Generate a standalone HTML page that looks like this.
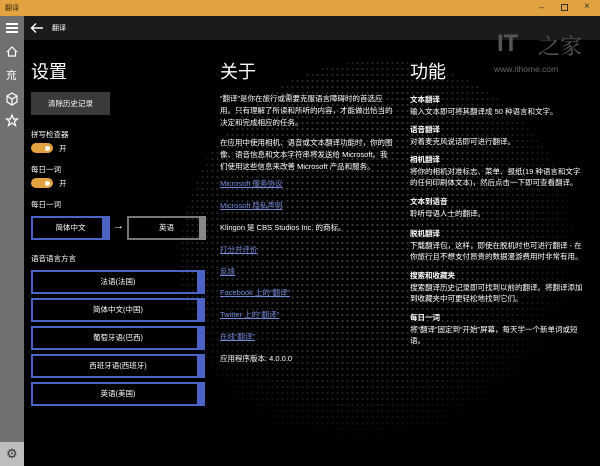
<!DOCTYPE html>
<html><head><meta charset="utf-8"><style>
*{margin:0;padding:0;box-sizing:border-box}
body{width:600px;height:466px;overflow:hidden;background:#000;font-family:"Liberation Sans","Noto Sans CJK SC",sans-serif;color:#fff;position:relative;font-size:7.5px}
.a{position:absolute;white-space:nowrap}
.title{left:0;top:0;width:600px;height:16px;background:#e1a23f}
.hdr{left:24px;top:16px;width:576px;height:24px;background:#1b1b1b}
.side{left:0;top:16px;width:24px;height:450px;background:#707070}
.globe{left:180px;top:60px;width:400px;height:400px;border-radius:50%;
background-image:radial-gradient(circle,#444 0.9px,transparent 1.2px);background-size:5px 6px;
-webkit-mask-image:radial-gradient(circle at 45% 40%,#000 30%,rgba(0,0,0,.5) 55%,transparent 70%);opacity:.9}
h1{position:absolute;font-weight:normal;font-size:18px}
.lnk{color:#7388d8;text-decoration:underline}
.dd{position:absolute;left:31px;width:174px;height:24px;border:2px solid #4b63c4;text-align:center;line-height:20px}
.dd:after{content:"";position:absolute;right:-2px;top:-2px;width:8px;height:24px;background:#4b63c4}
.tog{position:absolute;left:31px;width:22px;height:10px;border-radius:5px;background:#e1a23f}
.tog:after{content:"";position:absolute;right:3px;top:2.5px;width:5px;height:5px;border-radius:50%;background:#fff}
.b{font-weight:bold}
</style></head><body>
<div class="a globe"></div>
<div class="a title"></div>
<div class="a" style="left:5px;top:3px;font-size:7px;color:#3a2a10">翻译</div>
<div class="a" style="left:539px;top:2px;font-size:9px;color:#333">–</div>
<div class="a" style="left:561px;top:4px;width:7px;height:7px;border:1px solid #333"></div>
<div class="a" style="left:584px;top:1px;font-size:10px;color:#333">×</div>
<div class="a hdr"></div>
<div class="a side"></div>
<div class="a" style="left:6px;top:23px;width:12px;height:1.5px;background:#fff;box-shadow:0 4px #fff,0 8px #fff"></div>
<svg class="a" style="left:5px;top:44px" width="14" height="90" fill="none" stroke="#fff" stroke-width="1.2"><path d="M2 8L7 3L12 8M3.5 7V12H10.5V7"/><text x="1" y="35" fill="#fff" stroke="none" font-size="11" font-family="Noto Sans CJK SC">㐬</text><path d="M7 49L12 52V58L7 61L2 58V52Z M2 52L7 55L12 52M7 55V61"/><path d="M7 71L8.6 75H12.5L9.4 77.5L10.5 81.5L7 79L3.5 81.5L4.6 77.5L1.5 75H5.4Z"/></svg>
<div class="a" style="left:0;top:442px;width:24px;height:24px;background:#bdbdbd"></div>
<div class="a" style="left:6px;top:446px;font-size:13px;color:#333">⚙</div>
<svg class="a" style="left:30px;top:22px" width="14" height="12" fill="none" stroke="#fff" stroke-width="1.4"><path d="M13 6H2M6 1.5L1.5 6L6 10.5"/></svg>
<div class="a" style="left:52px;top:23px;font-size:7px">翻译</div>

<h1 style="left:31px;top:58px">设置</h1>
<div class="a" style="left:31px;top:92px;width:79px;height:23px;background:#3a3a3a;text-align:center;line-height:23px">清除历史记录</div>
<div class="a" style="left:31px;top:129px">拼写检查器</div>
<div class="tog" style="top:143px"></div><div class="a" style="left:59px;top:143px">开</div>
<div class="a" style="left:31px;top:164px">每日一词</div>
<div class="tog" style="top:178px"></div><div class="a" style="left:59px;top:178px">开</div>
<div class="a" style="left:31px;top:199px">每日一词</div>
<div class="a" style="left:31px;top:216px;width:79px;height:24px;border:2px solid #4b63c4;text-align:center;line-height:20px">简体中文</div>
<div class="a" style="left:102px;top:216px;width:8px;height:24px;background:#4b63c4"></div>
<div class="a" style="left:113px;top:220px;font-size:11px">→</div>
<div class="a" style="left:127px;top:216px;width:79px;height:24px;border:2px solid #777;text-align:center;line-height:20px">英语</div>
<div class="a" style="left:199px;top:216px;width:7px;height:24px;background:#888"></div>
<div class="a" style="left:31px;top:253px">语音语言方言</div>
<div class="dd" style="top:270px">法语(法国)</div>
<div class="dd" style="top:298px">简体中文(中国)</div>
<div class="dd" style="top:326px">葡萄牙语(巴西)</div>
<div class="dd" style="top:354px">西班牙语(西班牙)</div>
<div class="dd" style="top:382px">英语(美国)</div>

<h1 style="left:220px;top:58px">关于</h1>
<div class="a" style="left:220px;top:93px;line-height:12px">“翻译”是你在旅行或需要克服语言障碍时的首选应<br>用。只有理解了所读和所听的内容，才能做出恰当的<br>决定和完成相应的任务。</div>
<div class="a" style="left:220px;top:137px;line-height:12px">在应用中使用相机、语音或文本翻译功能时，你的图<br>像、语音信息和文本字符串将发送给 Microsoft。我<br>们使用这些信息来改善 Microsoft 产品和服务。</div>
<div class="a lnk" style="left:220px;top:178px">Microsoft 服务协议</div>
<div class="a lnk" style="left:220px;top:200px">Microsoft 隐私声明</div>
<div class="a" style="left:220px;top:222px">Klingon 是 CBS Studios Inc. 的商标。</div>
<div class="a lnk" style="left:220px;top:244px">打分并评价</div>
<div class="a lnk" style="left:220px;top:266px">反馈</div>
<div class="a lnk" style="left:220px;top:287px">Facebook 上的“翻译”</div>
<div class="a lnk" style="left:220px;top:309px">Twitter 上的“翻译”</div>
<div class="a lnk" style="left:220px;top:331px">在线“翻译”</div>
<div class="a" style="left:220px;top:353px">应用程序版本: 4.0.0.0</div>

<div class="a" style="left:497px;top:30px;font-size:24px;font-weight:bold;color:#555">IT</div>
<div class="a" style="left:538px;top:30px;font-size:22px;color:#555;font-family:'Noto Serif CJK SC',serif">之家</div>
<div class="a" style="left:494px;top:64px;font-size:8.5px;color:#666">www.ithome.com</div>

<h1 style="left:410px;top:58px">功能</h1>
<div class="a" style="left:410px;top:94px;line-height:11.5px"><span class="b">文本翻译</span><br>输入文本即可将其翻译成 50 种语言和文字。</div>
<div class="a" style="left:410px;top:124px;line-height:11.5px"><span class="b">语音翻译</span><br>对着麦克风说话即可进行翻译。</div>
<div class="a" style="left:410px;top:154px;line-height:11.5px"><span class="b">相机翻译</span><br>将你的相机对准标志、菜单、报纸(19 种语言和文字<br>的任何印刷体文本)，然后点击一下即可查看翻译。</div>
<div class="a" style="left:410px;top:196px;line-height:11.5px"><span class="b">文本到语音</span><br>聆听母语人士的翻译。</div>
<div class="a" style="left:410px;top:228px;line-height:11.5px"><span class="b">脱机翻译</span><br>下载翻译包，这样，即使在脱机时也可进行翻译 - 在<br>你旅行且不想支付昂贵的数据漫游费用时非常有用。</div>
<div class="a" style="left:410px;top:270px;line-height:11.5px"><span class="b">搜索和收藏夹</span><br>搜索翻译历史记录即可找到以前的翻译。将翻译添加<br>到收藏夹中可更轻松地找到它们。</div>
<div class="a" style="left:410px;top:312px;line-height:11.5px"><span class="b">每日一词</span><br>将“翻译”固定到“开始”屏幕，每天学一个新单词或短<br>语。</div>
</body></html>
